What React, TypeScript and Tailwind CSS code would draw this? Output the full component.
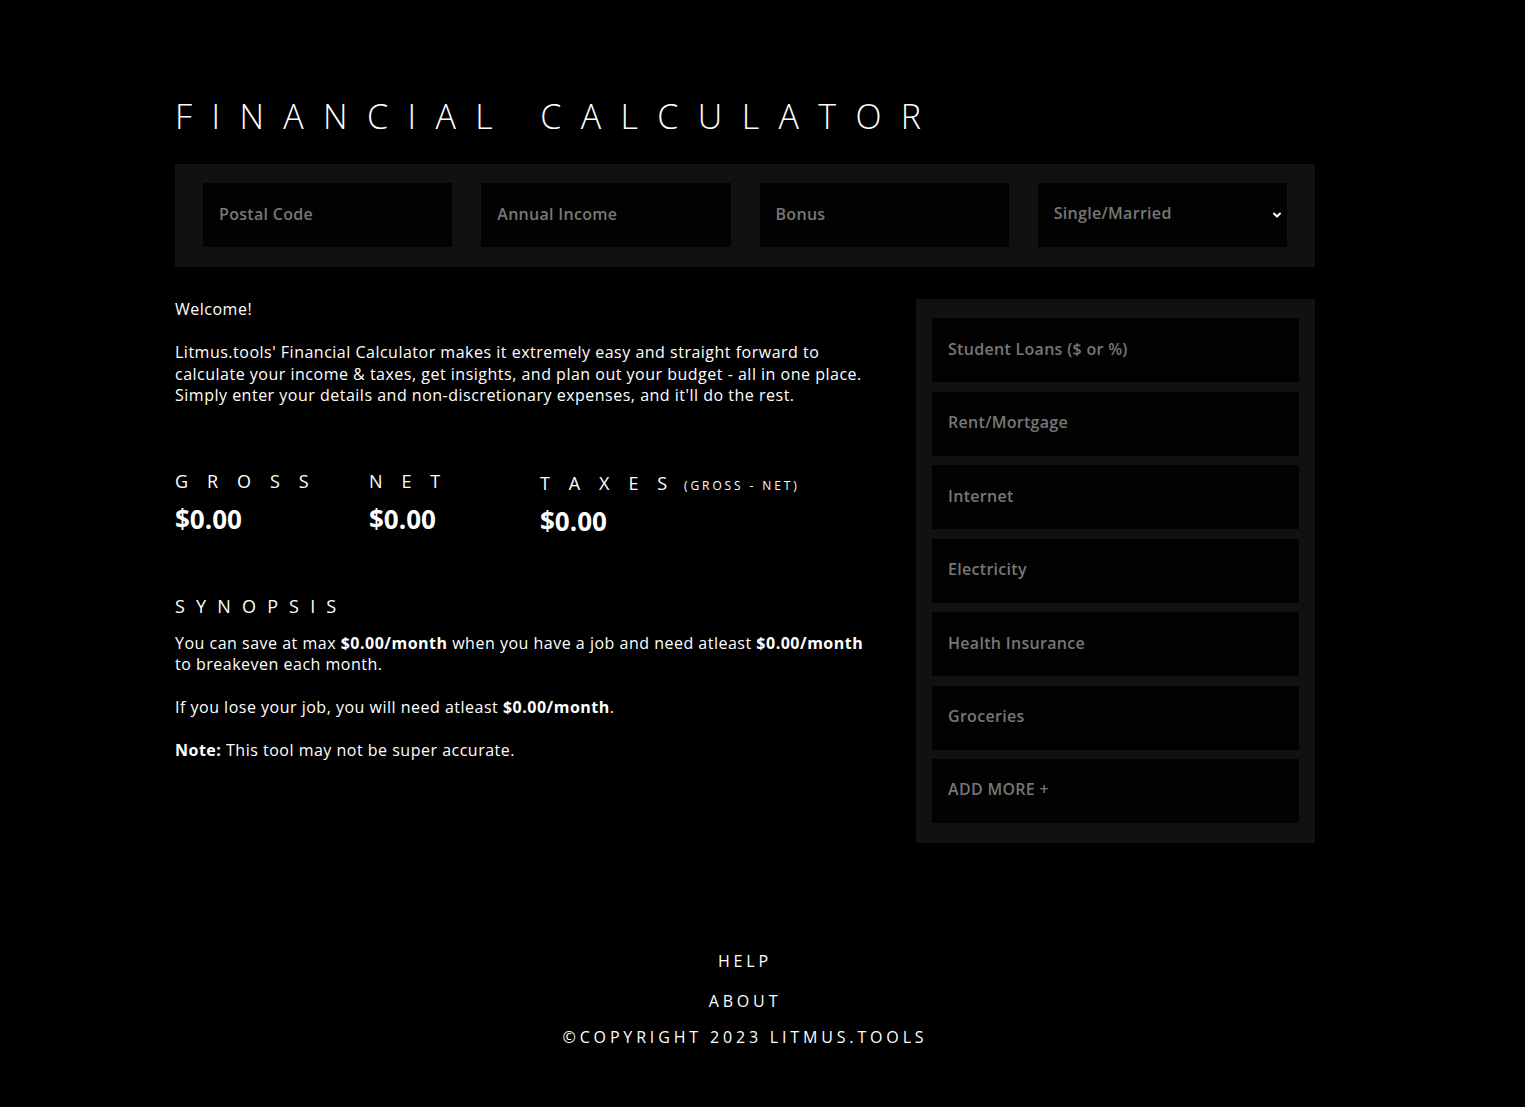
import React from 'react';
import { ChevronDown } from 'lucide-react';

const topFields = ['Postal Code', 'Annual Income', 'Bonus'];

const expenses = [
  'Student Loans ($ or %)',
  'Rent/Mortgage',
  'Internet',
  'Electricity',
  'Health Insurance',
  'Groceries',
];

const font = "font-['Open_Sans',sans-serif]";
const field =
  'h-[64px] bg-[#020202] px-[16px] pb-[3px] text-[16px] tracking-[0.3px] font-semibold text-white placeholder:text-[#777777] outline-none';

const Stat: React.FC<{ label: string; note?: string; className?: string }> = ({ label, note, className }) => (
  <div className={className}>
    <div className="flex items-baseline h-[24px]">
      <span className="text-[18px] tracking-[1.05em] font-normal">{label}</span>
      {note && <span className="text-[12px] tracking-[0.24em] ml-[-2px]">{note}</span>}
    </div>
    <div className="text-[26px] font-bold mt-[8px]">$0.00</div>
  </div>
);

const App: React.FC = () => {
  return (
    <div className={`min-h-[1107px] bg-black text-white ${font}`}>
      <div className="ml-[175px] w-[1140px] pt-[96px]">
        {/* Title */}
        <h1 className="text-[34px] font-light tracking-[0.57em] leading-[40px] whitespace-nowrap">
          FINANCIAL CALCULATOR
        </h1>

        {/* Top inputs */}
        <div className="mt-[28px] bg-[#111111] px-[28px] pt-[19px] pb-[20px] grid grid-cols-4 gap-x-[29px]">
          {topFields.map((f) => (
            <input key={f} placeholder={f} className={field} />
          ))}
          <div className="h-[64px] bg-[#020202] pl-[16px] pr-[4px] flex items-center justify-between">
            <span className="text-[16px] tracking-[0.3px] font-semibold text-[#777777] mt-[-4px]">Single/Married</span>
            <ChevronDown className="w-[12px] h-[12px] text-white" strokeWidth={4} />
          </div>
        </div>

        {/* Main */}
        <div className="flex mt-[32px]">
          <div className="flex-1 pr-[20px] text-[16px] tracking-[0.5px] leading-[21.5px]">
            <p>Welcome!</p>
            <p className="mt-[21.5px] whitespace-nowrap">
              Litmus.tools' Financial Calculator makes it extremely easy and straight forward to
              <br />
              calculate your income &amp; taxes, get insights, and plan out your budget - all in one place.
              <br />
              Simply enter your details and non-discretionary expenses, and it'll do the rest.
            </p>

            <div className="flex mt-[61px] tracking-normal leading-normal">
              <Stat label="GROSS" className="w-[194px]" />
              <Stat label="NET" className="w-[171px]" />
              <Stat label="TAXES" note="(GROSS - NET)" className="mt-[2px]" />
            </div>

            <h2 className="text-[18px] tracking-[0.62em] mt-[53px] leading-[24px]">SYNOPSIS</h2>
            <div className="mt-[15px] whitespace-nowrap">
              <p>
                You can save at max <b>$0.00/month</b> when you have a job and need atleast <b>$0.00/month</b>
                <br />
                to breakeven each month.
              </p>
              <p className="mt-[21.5px]">
                If you lose your job, you will need atleast <b>$0.00/month</b>.
              </p>
              <p className="mt-[21.5px]">
                <b>Note:</b> This tool may not be super accurate.
              </p>
            </div>
          </div>

          {/* Expenses panel */}
          <div className="w-[399px] bg-[#111111] px-[16px] pt-[19px] pb-[20px] flex flex-col gap-[9.5px]">
            {expenses.map((e) => (
              <input key={e} placeholder={e} className={field} />
            ))}
            <div className="h-[64px] bg-[#020202] px-[16px] flex items-center text-[16px] tracking-[0.3px] font-semibold text-[#777777]">
              <span className="mt-[-4px]">ADD MORE +</span>
            </div>
          </div>
        </div>

        {/* Footer */}
        <div className="flex flex-col items-center mt-[106px] pb-[50px] text-[16px] tracking-[0.24em]">
          <a className="leading-[24px]">HELP</a>
          <a className="leading-[24px] mt-[16px]">ABOUT</a>
          <p className="leading-[24px] mt-[12px]">©COPYRIGHT 2023 LITMUS.TOOLS</p>
        </div>
      </div>
    </div>
  );
};

export default App;
